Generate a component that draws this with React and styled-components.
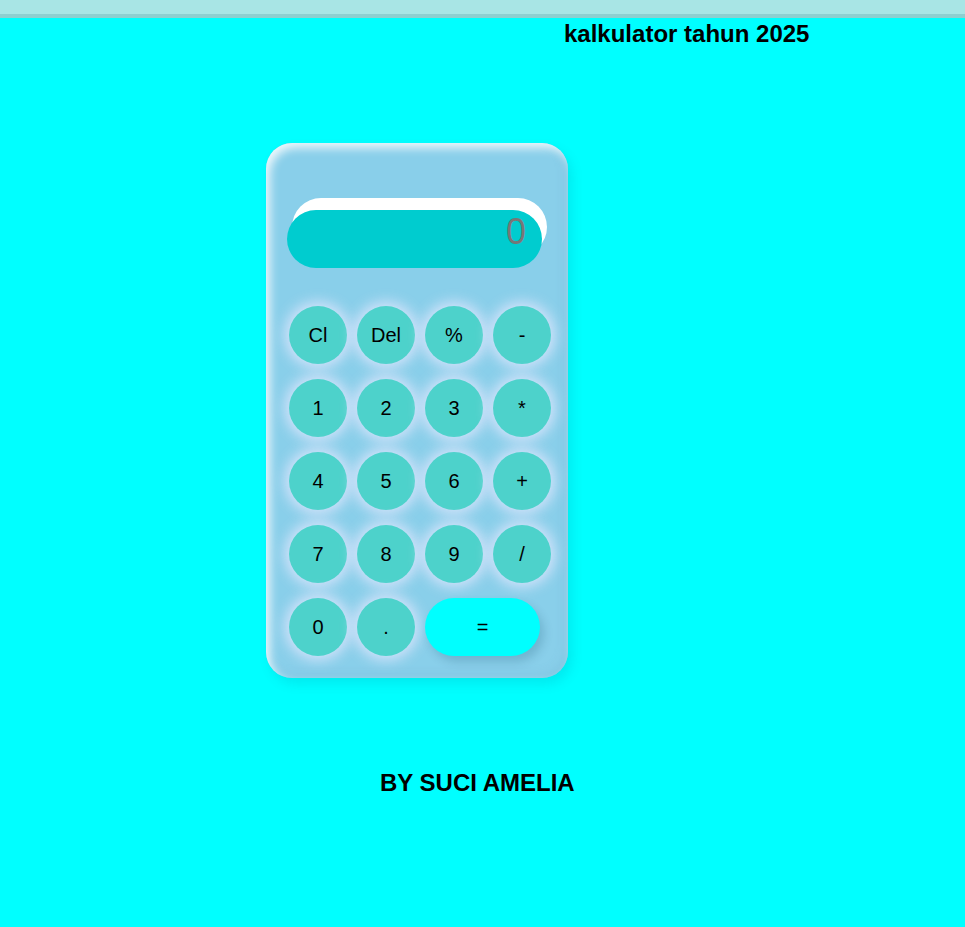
import React from "react";
import styled, { createGlobalStyle } from "styled-components";

const Global = createGlobalStyle`
  html, body { margin: 0; padding: 0; }
  body {
    background: #00ffff;
    font-family: "Liberation Sans", Arial, sans-serif;
    min-height: 927px;
  }
`;

const TopBand = styled.div`
  height: 14px;
  background: #a8e5e5;
  border-bottom: 4px solid #8dcfd0;
`;

const Title = styled.h1`
  margin: 2px 0 0;
  padding-left: 564px;
  font-size: 24px;
  font-weight: bold;
  line-height: 28px;
  color: #000;
`;

const Stage = styled.div`
  padding: 95px 0 0 266px;
`;

const Card = styled.div`
  width: 302px;
  box-sizing: border-box;
  padding: 67px 17px 22px 21px;
  border-radius: 26px;
  background: #89cfea;
  box-shadow:
    inset 4px 5px 10px rgba(255, 255, 255, 0.85),
    inset -3px -3px 8px rgba(120, 190, 220, 0.5),
    4px 6px 12px rgba(0, 80, 120, 0.12);
`;

const Display = styled.div`
  width: 255px;
  height: 58px;
  box-sizing: border-box;
  border-radius: 30px;
  background: #00cccf;
  box-shadow: 5px -12px 0 #ffffff;
  color: #777777;
  font-size: 36px;
  line-height: 44px;
  text-align: right;
  padding: 0 16px 14px 0;
`;

const Pad = styled.div`
  display: grid;
  grid-template-columns: repeat(4, 58px);
  column-gap: 10px;
  row-gap: 15px;
  margin-top: 38px;
  margin-left: 2px;
`;

const Key = styled.button`
  width: ${(p) => (p.$wide ? "115px" : "58px")};
  height: 58px;
  grid-column: ${(p) => (p.$wide ? "span 2" : "auto")};
  justify-self: start;
  border: none;
  border-radius: 29px;
  background: ${(p) => (p.$wide ? "#00ffff" : "#4dd2cb")};
  box-shadow: ${(p) =>
    p.$wide
      ? "4px 6px 10px rgba(0, 60, 90, 0.18)"
      : "0 0 14px 4px rgba(232, 232, 255, 0.8)"};
  font-family: "Liberation Sans", Arial, sans-serif;
  font-size: 20px;
  color: #000;
  padding: 0;
  cursor: pointer;
`;

const Footer = styled.div`
  padding: 91px 0 0 380px;
  font-size: 24px;
  font-weight: bold;
  line-height: 28px;
  color: #000;
`;

const keys = [
  "Cl", "Del", "%", "-",
  "1", "2", "3", "*",
  "4", "5", "6", "+",
  "7", "8", "9", "/",
  "0", ".",
];

export default function App() {
  return (
    <>
      <Global />
      <TopBand />
      <Title>kalkulator tahun 2025</Title>
      <Stage>
        <Card>
          <Display>0</Display>
          <Pad>
            {keys.map((k) => (
              <Key key={k}>{k}</Key>
            ))}
            <Key $wide>=</Key>
          </Pad>
        </Card>
      </Stage>
      <Footer>BY SUCI AMELIA</Footer>
    </>
  );
}
